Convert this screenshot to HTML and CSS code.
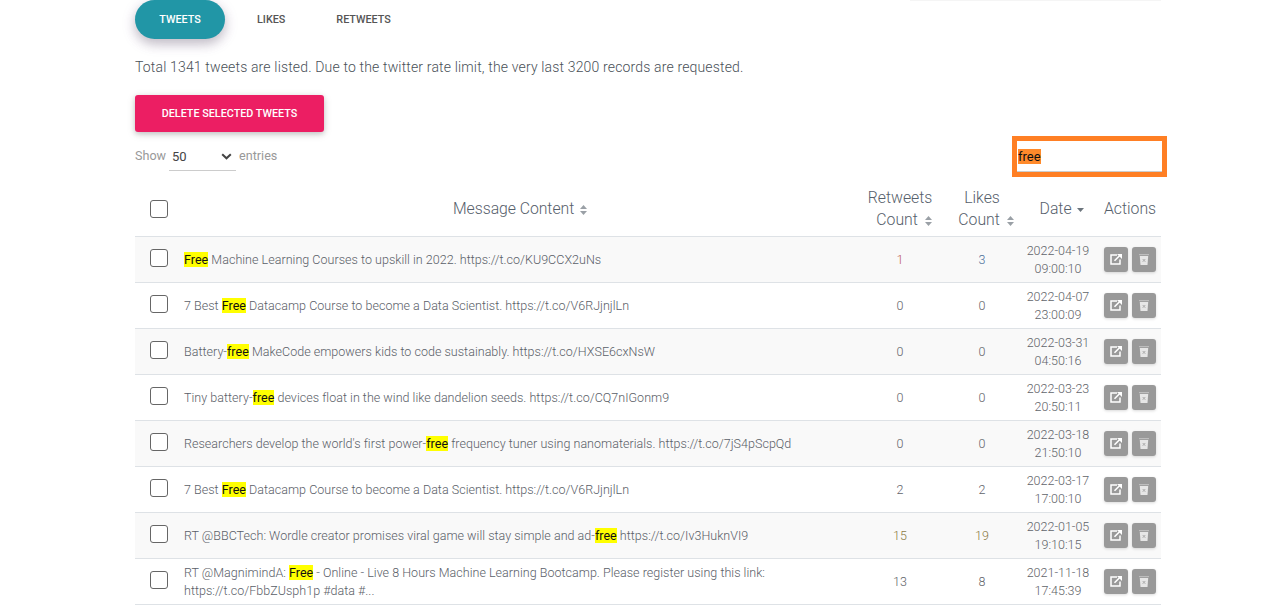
FILE: index.html
```html
<!DOCTYPE html>
<html lang="en">
<head>
<meta charset="utf-8">
<title>Tweets</title>
<link rel="stylesheet" href="styles.css">
</head>
<body>
<svg class="defs" width="0" height="0" aria-hidden="true">
  <symbol id="i-edit" viewBox="0 0 12 11"><path d="M7 1H1v9h9V5.500" fill="none" stroke="#fff" stroke-width="1.500"/><path d="M4.500 6.800 10 1.300" fill="none" stroke="#fff" stroke-width="1.600"/><path d="M7 0h5v5z" fill="#fff"/></symbol>
  <symbol id="i-trash" viewBox="0 0 10 11"><path d="M0 0h10v1.200H0z" fill="#bdbdbd"/><path d="M.8 2h8.400L8.500 11h-7z" fill="#e6e6e6"/><path d="m3.700 5 2.600 2.800M6.300 5 3.700 7.800" stroke="#aaa" stroke-width="1"/></symbol>
</svg>
<div class="topline"></div>
<main class="page">
  <nav class="tabs">
    <a class="tab tab-active">TWEETS</a>
    <a class="tab tab-likes">LIKES</a>
    <a class="tab tab-rts">RETWEETS</a>
  </nav>
  <p class="summary">Total 1341 tweets are listed. Due to the twitter rate limit, the very last 3200 records are requested.</p>
  <button class="delete-btn">DELETE SELECTED TWEETS</button>
  <div class="controls">
    <div class="length">
      <span>Show</span>
      <span class="select"><span>50</span><svg width="11" height="7" viewBox="0 0 11 7"><path d="M1.200 1.200 5.500 5.300 9.800 1.200" fill="none" stroke="#444" stroke-width="2"/></svg></span>
      <span>entries</span>
    </div>
    <div class="search"><div class="search-inner"><span class="search-sel">free</span></div></div>
  </div>
  <table class="grid">
    <colgroup><col class="c-check"><col class="c-msg"><col class="c-rt"><col class="c-lk"><col class="c-date"><col class="c-act"></colgroup>
    <thead>
      <tr>
        <th><span class="check"></span></th>
        <th class="th-msg">Message Content <svg class="sort" width="7" height="10" viewBox="0 0 7 10"><path d="M3.500 0 7 4H0zM3.500 10 0 6h7z"/></svg></th>
        <th>Retweets<br><span class="cnt">Count</span> <svg class="sort sort-wide" width="7" height="10" viewBox="0 0 7 10"><path d="M3.500 0 7 4H0zM3.500 10 0 6h7z"/></svg></th>
        <th>Likes<br><span class="cnt">Count</span> <svg class="sort sort-wide" width="7" height="10" viewBox="0 0 7 10"><path d="M3.500 0 7 4H0zM3.500 10 0 6h7z"/></svg></th>
        <th class="th-date">Date <svg class="sort sort-down" width="7" height="4" viewBox="0 0 7 4"><path d="M0 0h7L3.500 4z"/></svg></th>
        <th class="th-act">Actions</th>
      </tr>
    </thead>
    <tbody>
      <tr>
        <td class="cb"><span class="check"></span></td>
        <td class="msg"><mark>Free</mark> Machine Learning Courses to upskill in 2022. https://t.co/KU9CCX2uNs</td>
        <td class="num red">1</td><td class="num blue">3</td>
        <td class="date">2022-04-19<br>09:00:10</td>
        <td><div class="btns"><span class="ib"><svg class="ic-edit"><use href="#i-edit"/></svg></span><span class="ib"><svg class="ic-trash"><use href="#i-trash"/></svg></span></div></td>
      </tr>
      <tr>
        <td class="cb"><span class="check"></span></td>
        <td class="msg">7 Best <mark>Free</mark> Datacamp Course to become a Data Scientist. https://t.co/V6RJjnjlLn</td>
        <td class="num">0</td><td class="num">0</td>
        <td class="date">2022-04-07<br>23:00:09</td>
        <td><div class="btns"><span class="ib"><svg class="ic-edit"><use href="#i-edit"/></svg></span><span class="ib"><svg class="ic-trash"><use href="#i-trash"/></svg></span></div></td>
      </tr>
      <tr>
        <td class="cb"><span class="check"></span></td>
        <td class="msg">Battery-<mark>free</mark> MakeCode empowers kids to code sustainably. https://t.co/HXSE6cxNsW</td>
        <td class="num">0</td><td class="num">0</td>
        <td class="date">2022-03-31<br>04:50:16</td>
        <td><div class="btns"><span class="ib"><svg class="ic-edit"><use href="#i-edit"/></svg></span><span class="ib"><svg class="ic-trash"><use href="#i-trash"/></svg></span></div></td>
      </tr>
      <tr>
        <td class="cb"><span class="check"></span></td>
        <td class="msg">Tiny battery-<mark>free</mark> devices float in the wind like dandelion seeds. https://t.co/CQ7nIGonm9</td>
        <td class="num">0</td><td class="num">0</td>
        <td class="date">2022-03-23<br>20:50:11</td>
        <td><div class="btns"><span class="ib"><svg class="ic-edit"><use href="#i-edit"/></svg></span><span class="ib"><svg class="ic-trash"><use href="#i-trash"/></svg></span></div></td>
      </tr>
      <tr>
        <td class="cb"><span class="check"></span></td>
        <td class="msg">Researchers develop the world's first power-<mark>free</mark> frequency tuner using nanomaterials. https://t.co/7jS4pScpQd</td>
        <td class="num">0</td><td class="num">0</td>
        <td class="date">2022-03-18<br>21:50:10</td>
        <td><div class="btns"><span class="ib"><svg class="ic-edit"><use href="#i-edit"/></svg></span><span class="ib"><svg class="ic-trash"><use href="#i-trash"/></svg></span></div></td>
      </tr>
      <tr>
        <td class="cb"><span class="check"></span></td>
        <td class="msg">7 Best <mark>Free</mark> Datacamp Course to become a Data Scientist. https://t.co/V6RJjnjlLn</td>
        <td class="num">2</td><td class="num">2</td>
        <td class="date">2022-03-17<br>17:00:10</td>
        <td><div class="btns"><span class="ib"><svg class="ic-edit"><use href="#i-edit"/></svg></span><span class="ib"><svg class="ic-trash"><use href="#i-trash"/></svg></span></div></td>
      </tr>
      <tr>
        <td class="cb"><span class="check"></span></td>
        <td class="msg">RT @BBCTech: Wordle creator promises viral game will stay simple and ad-<mark>free</mark> https://t.co/Iv3HuknVI9</td>
        <td class="num olive">15</td><td class="num olive">19</td>
        <td class="date">2022-01-05<br>19:10:15</td>
        <td><div class="btns"><span class="ib"><svg class="ic-edit"><use href="#i-edit"/></svg></span><span class="ib"><svg class="ic-trash"><use href="#i-trash"/></svg></span></div></td>
      </tr>
      <tr>
        <td class="cb"><span class="check"></span></td>
        <td class="msg">RT @MagnimindA: <mark>Free</mark> - Online - Live 8 Hours Machine Learning Bootcamp. Please register using this link:<br>https://t.co/FbbZUsph1p #data #...</td>
        <td class="num">13</td><td class="num">8</td>
        <td class="date">2021-11-18<br>17:45:39</td>
        <td><div class="btns"><span class="ib"><svg class="ic-edit"><use href="#i-edit"/></svg></span><span class="ib"><svg class="ic-trash"><use href="#i-trash"/></svg></span></div></td>
      </tr>
    </tbody>
  </table>
</main>
</body>
</html>
```
FILE: styles.css
```css
html, body { margin: 0; padding: 0; background: #fff; }
body { font-family: Roboto, "Liberation Sans", sans-serif; font-weight: 300; color: #495057; height: 605px; overflow: hidden; position: relative; }
.defs { position: absolute; }
.topline { position: absolute; top: 0; left: 910px; width: 251px; height: 1px; background: #f5f5f5; }
.page { width: 1026px; margin-left: 135px; }
.tabs { display: flex; height: 39px; align-items: center; }
.tab { font-size: 10.800px; font-weight: 500; color: #555; line-height: 39px; }
.tab-active { width: 90px; text-align: center; color: #fff; background: #2196a6; border-radius: 20px; box-shadow: 0 5px 11px 0 rgba(0,0,0,.18), 0 4px 15px 0 rgba(100,50,150,.15); }
.tab-likes { margin-left: 32px; }
.tab-rts { margin-left: 51px; }
.summary { margin: 20px 0 0; font-size: 14px; line-height: 17px; letter-spacing: .157px; color: #495057; }
.delete-btn { display: block; margin-top: 19px; width: 189px; height: 37px; padding: 0; border: 0; border-radius: 3px; background: #ec1e63; color: #fff; font: 500 10.800px/37px Roboto, sans-serif; box-shadow: 0 2px 5px 0 rgba(0,0,0,.16), 0 2px 10px 0 rgba(0,0,0,.12); }
.controls { display: flex; justify-content: space-between; align-items: flex-start; margin: 4px -6px 0 0; height: 47px; }
.length { display: flex; align-items: center; gap: 3px; font-size: 12.600px; color: #999; font-weight: 400; margin-top: 4px; height: 31px; }
.select { display: flex; justify-content: space-between; align-items: center; width: 67px; height: 30px; box-sizing: border-box; padding: 2px 4px 0 3px; border-bottom: 1px solid #ccc; color: #444; font-size: 13px; }
.search { box-sizing: border-box; width: 155px; height: 41px; border: 5px solid #ff7f24; }
.search-inner { height: 30px; box-sizing: content-box; border-bottom: 1px solid #ccc; display: flex; align-items: center; padding: 0 0 0 1px; }
.search-sel { background: #ff8a2b; color: #111; font-size: 13px; font-weight: 400; line-height: 15px; }
.grid { width: 1026px; border-collapse: collapse; table-layout: fixed; margin-top: -1px; }
.c-check { width: 49px; } .c-msg { width: 675px; } .c-rt { width: 82px; } .c-lk { width: 82px; } .c-date { width: 70px; } .c-act { width: 68px; }
.grid th { height: 54px; padding: 0; font-size: 15.800px; font-weight: 300; line-height: 22px; color: #56606b; text-align: center; border-bottom: 1px solid #dee2e6; box-sizing: border-box; }
.grid th:first-child, .grid td:first-child { text-align: left; padding-left: 15px; }
.grid th.th-msg { padding-right: 3px; letter-spacing: -.05px; }
.grid th.th-date { padding-left: 8px; }
.grid th.th-act { padding-left: 6px; }
.cnt { padding-left: 8px; }
.sort { fill: #9aa0a6; margin-left: 2px; vertical-align: -1px; }
.sort-wide { margin-left: 3px; }
.sort-down { fill: #6c757d; vertical-align: 2px; }
.check { display: block; width: 16px; height: 16px; border: 1px solid #666; border-radius: 3px; background: #fff; }
.grid td { height: 46px; padding: 0; box-sizing: border-box; border-bottom: 1px solid #dee2e6; font-size: 12.500px; color: #5f6469; font-weight: 300; line-height: 18px; }
.grid td.cb { padding-bottom: 2px; }
.grid td.msg, .grid td.num, .grid td.date { padding-top: 2px; }
.grid tbody tr:nth-child(odd) td { background: #f9f9f9; }
.grid td.msg { color: #5a6068; letter-spacing: .03px; }
mark { background: #ff0; color: #111; font-weight: 400; }
.num { text-align: center; }
.grid td.red { color: #c0605a; } .grid td.blue { color: #4d7099; } .grid td.olive { color: #8b7a45; }
.date { text-align: center; }
.btns { display: flex; gap: 4px; padding-left: 11px; }
.ib { display: flex; align-items: center; justify-content: center; width: 24px; height: 25px; border-radius: 3px; background: #999; box-shadow: 0 1px 3px rgba(0,0,0,.15); }
.ic-edit { width: 12px; height: 11px; }
.ic-trash { width: 10px; height: 11px; }
```
